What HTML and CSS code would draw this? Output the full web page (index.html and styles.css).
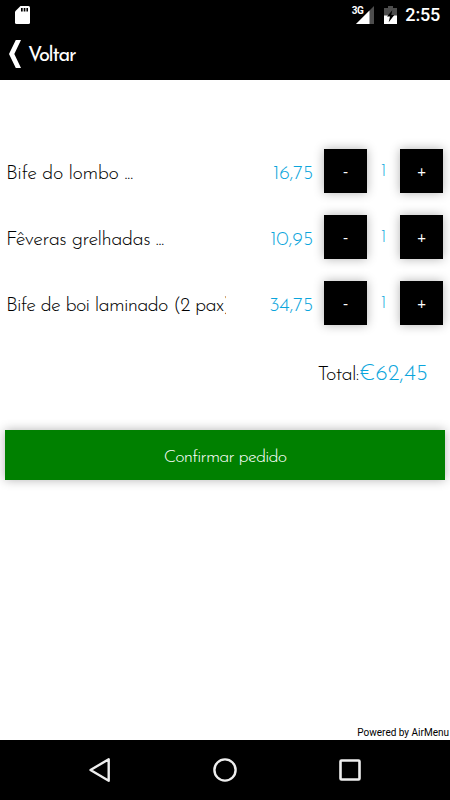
FILE: index.html
```html
<!DOCTYPE html>
<html lang="pt">
<head>
    <meta charset="UTF-8">
    <meta name="viewport" content="width=device-width, initial-scale=1.0">
    <title>AirMenu - Pedido</title>
    <link rel="stylesheet" href="styles.css">
</head>
<body>
    <div class="status-bar">
        <svg class="sd-icon" width="15" height="18" viewBox="0 0 15 18">
            <path fill="#fff" d="M5.500 0H13.500Q15 0 15 1.500V16.500Q15 18 13.500 18H1.500Q0 18 0 16.500V5.500Z"/>
            <path fill="#000" d="M6 2h1.700v3.600H6zM8.700 2h1.700v3.600H8.700zM11.400 2h1.600v3.600h-1.600z"/>
        </svg>
        <div class="status-right">
            <span class="network">3G</span>
            <svg class="signal-icon" width="18" height="18" viewBox="0 0 18 18">
                <path fill="#4d4d4d" d="M18 0V18H0Z"/>
                <path fill="#fff" d="M13.500 4.500V18H0Z"/>
            </svg>
            <svg class="battery-icon" width="13" height="18" viewBox="0 0 13 18">
                <path fill="#4d4d4d" d="M4 0h5v2h4v8H0V2h4z"/>
                <path fill="#fff" d="M0 9.500h13V18H0z"/>
                <path fill="#000" d="M8.300 4.200L3 10.500h3L4.700 16.200 10.300 9H7.300z"/>
            </svg>
            <span class="clock">2:55</span>
        </div>
    </div>
    <div class="header">
        <a href="#" class="back">
            <svg width="13" height="28" viewBox="0 0 13 28">
                <path fill="#fff" d="M6.800 0H12L5.300 14 12 28H6.800L0 14Z"/>
            </svg>
            <span class="back-text">Voltar</span>
        </a>
    </div>
    <div class="content">
        <div class="order-list">
            <div class="order-item">
                <div class="item-name name-1">Bife do lombo ...</div>
                <div class="item-price">16,75</div>
                <button class="qty-button">-</button>
                <div class="item-qty">1</div>
                <button class="qty-button">+</button>
            </div>
            <div class="order-item">
                <div class="item-name name-2">Fêveras grelhadas ...</div>
                <div class="item-price">10,95</div>
                <button class="qty-button">-</button>
                <div class="item-qty">1</div>
                <button class="qty-button">+</button>
            </div>
            <div class="order-item">
                <div class="item-name name-3">Bife de boi laminado (2 pax)</div>
                <div class="item-price">34,75</div>
                <button class="qty-button">-</button>
                <div class="item-qty">1</div>
                <button class="qty-button">+</button>
            </div>
        </div>
        <div class="total">
            <span class="total-label">Total:</span><span class="total-value">€62,45</span>
        </div>
        <button class="confirm-button">Confirmar pedido</button>
        <div class="powered">Powered by AirMenu</div>
    </div>
    <div class="nav-bar">
        <svg width="24" height="26" viewBox="0 0 24 26">
            <path fill="none" stroke="#eee" stroke-width="2.400" stroke-linejoin="round" d="M19.700 2.300V23.700L1.500 13Z"/>
        </svg>
        <svg width="24" height="24" viewBox="0 0 24 24">
            <circle cx="11" cy="12" r="10.600" fill="none" stroke="#eee" stroke-width="2.400"/>
        </svg>
        <svg width="22" height="22" viewBox="0 0 22 22">
            <rect x="1.500" y="1.500" width="19" height="19" rx="1" fill="none" stroke="#eee" stroke-width="2.600"/>
        </svg>
    </div>
</body>
</html>
```

FILE: styles.css
```css
* {
    box-sizing: border-box;
    margin: 0;
    padding: 0;
}
body {
    width: 450px;
    height: 800px;
    display: flex;
    flex-direction: column;
    overflow: hidden;
    background-color: white;
    color: #000;
    font-family: 'Josefin Sans', Lato, sans-serif;
    font-weight: 300;
}
svg {
    overflow: visible;
}
.status-bar {
    height: 30px;
    padding: 0 10px 0 15px;
    display: flex;
    align-items: center;
    justify-content: space-between;
    background-color: black;
    color: white;
    font-family: Roboto, sans-serif;
}
.status-right {
    display: flex;
    align-items: center;
}
.network {
    font-size: 10px;
    font-weight: 700;
    line-height: 10px;
    margin: 0 -7px 9px 0;
    letter-spacing: -0.5px;
}
.battery-icon {
    margin: 0 8px 0 10px;
}
.clock {
    font-size: 18px;
    font-weight: 500;
    line-height: 32px;
    letter-spacing: -0.2px;
}
.header {
    height: 50px;
    padding: 0 9px;
    display: flex;
    align-items: center;
    background-color: black;
}
.back {
    display: flex;
    align-items: center;
    color: white;
    text-decoration: none;
    margin-bottom: 3px;
}
.back-text {
    font-size: 20px;
    font-weight: 400;
    margin: 4px 0 0 6px;
    letter-spacing: -1.2px;
}
.content {
    flex: 1;
    display: flex;
    flex-direction: column;
}
.order-list {
    display: flex;
    flex-direction: column;
    gap: 22px;
    padding: 69px 6px 0;
}
.order-item {
    height: 44px;
    display: flex;
    align-items: center;
}
.item-name {
    width: 220px;
    padding-top: 5px;
    font-size: 20px;
    line-height: 28px;
    white-space: nowrap;
    overflow: hidden;
}
.name-1 {
    letter-spacing: -0.45px;
}
.name-2 {
    letter-spacing: -0.55px;
}
.name-3 {
    letter-spacing: -0.75px;
}
.item-price {
    width: 87px;
    margin-right: 11px;
    padding-top: 5px;
    font-size: 20px;
    letter-spacing: -0.2px;
    text-align: right;
    color: #0aa5dc;
}
.qty-button {
    width: 43px;
    height: 44px;
    border: none;
    background-color: black;
    color: white;
    font-family: Lato, sans-serif;
    font-size: 15px;
    font-weight: 400;
    box-shadow: 0 0 10px rgba(0, 0, 0, 0.3);
}
.item-qty {
    width: 33px;
    margin-bottom: 1px;
    padding-top: 2px;
    font-size: 16px;
    text-align: center;
    color: #0aa5dc;
}
.total {
    height: 30px;
    margin: 38px 22px 0 0;
    display: flex;
    align-items: baseline;
    justify-content: flex-end;
}
.total-label {
    font-size: 20px;
    letter-spacing: -0.7px;
}
.total-value {
    font-size: 23px;
    color: #0aa5dc;
}
.confirm-button {
    height: 50px;
    margin: 37px 5px 0;
    border: none;
    background-color: #008000;
    color: white;
    font-family: inherit;
    font-size: 18px;
    font-weight: 300;
    letter-spacing: -0.8px;
    padding-top: 6px;
    box-shadow: 0 0 10px rgba(0, 0, 0, 0.3);
}
.powered {
    margin: auto 1px 0 0;
    font-family: Roboto, sans-serif;
    font-size: 10px;
    font-weight: 400;
    line-height: 14px;
    text-align: right;
}
.nav-bar {
    height: 60px;
    padding: 0 89px;
    display: flex;
    align-items: center;
    justify-content: space-between;
    background-color: black;
}
```
